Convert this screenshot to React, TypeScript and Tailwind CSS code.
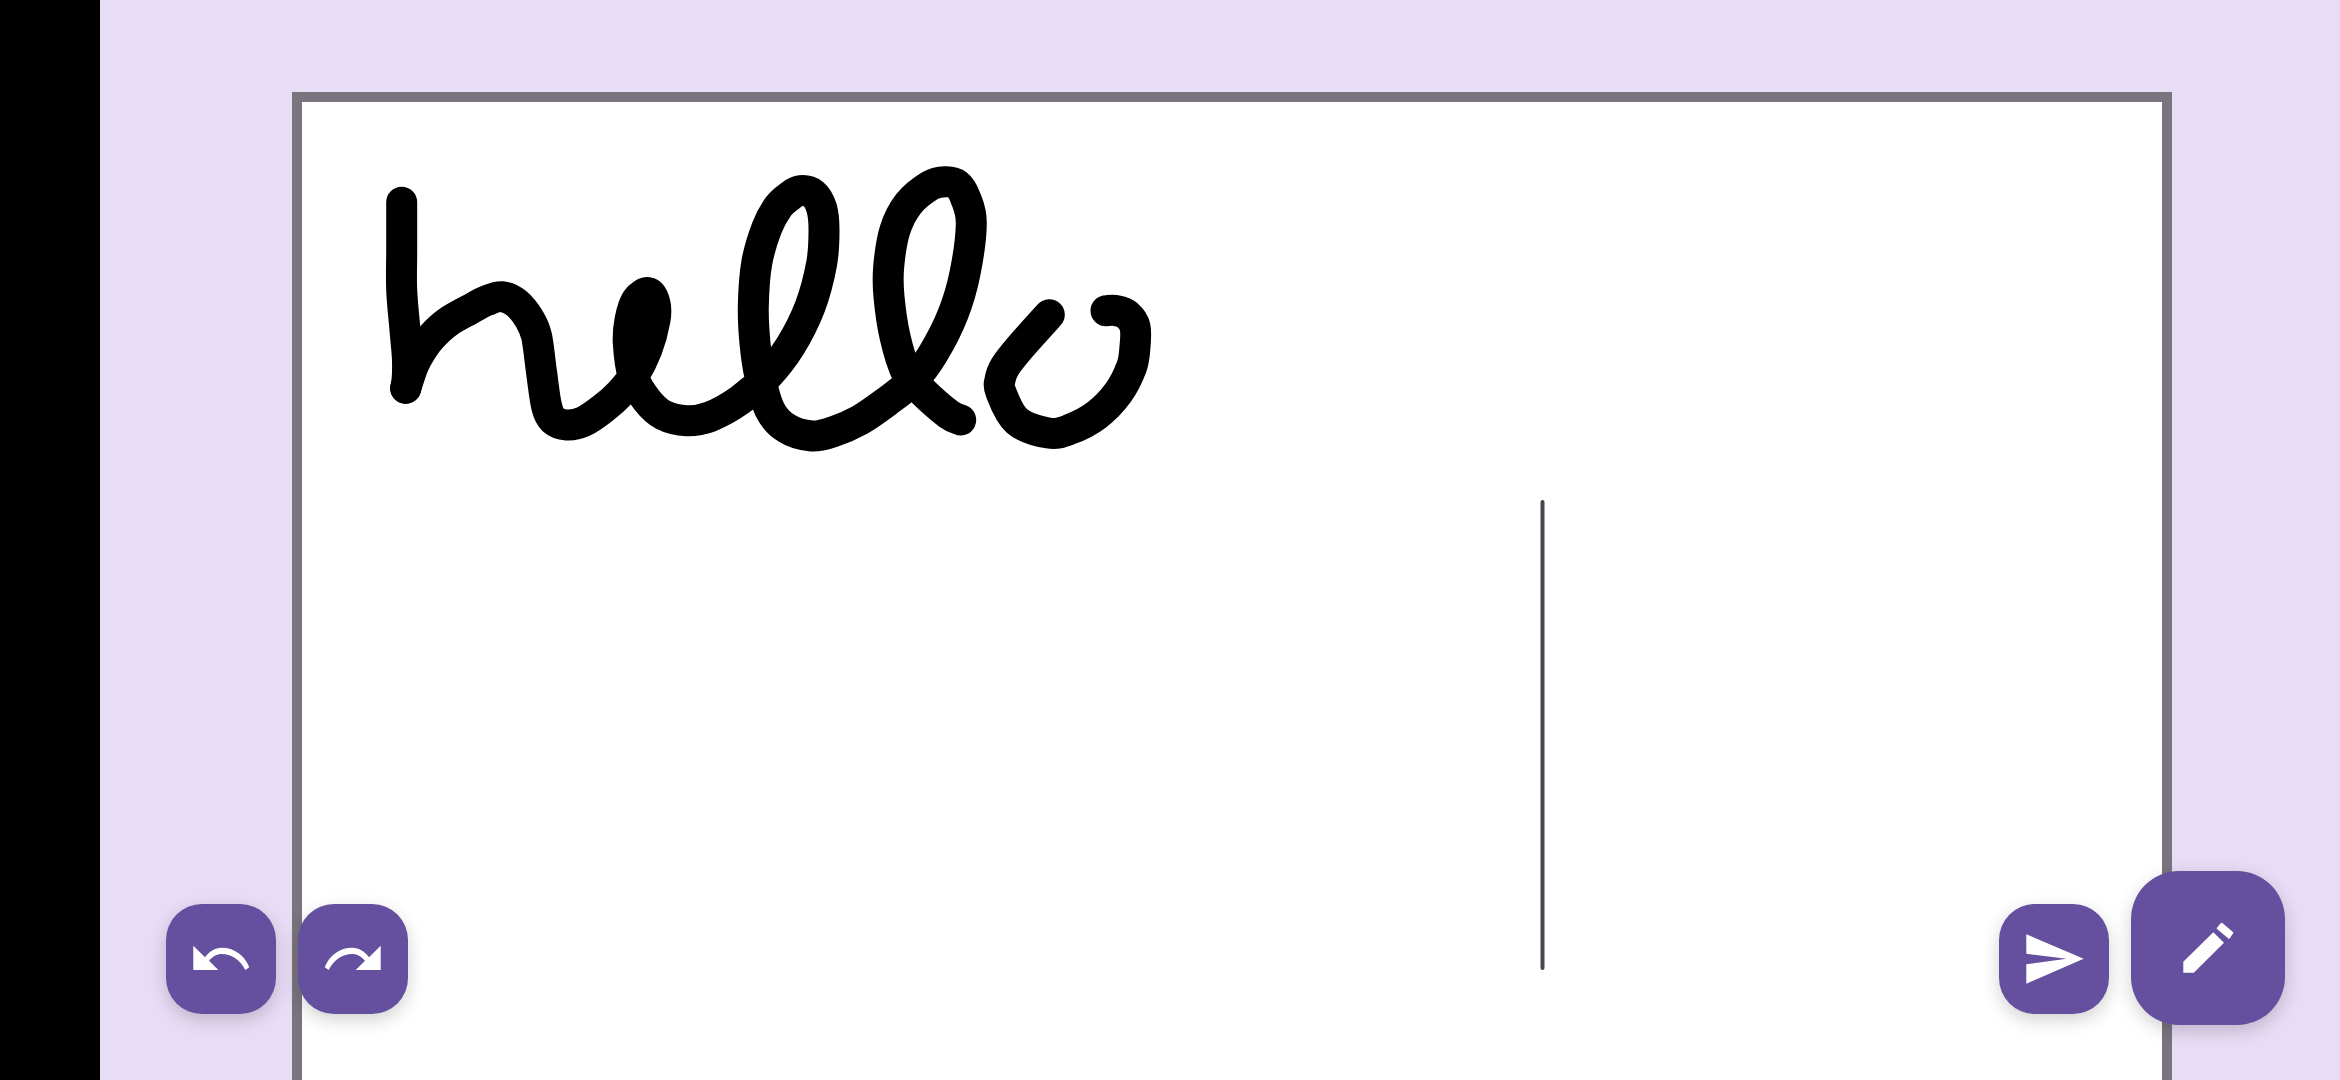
const shift = (ox: number, oy: number, pts: number[][]) =>
  pts.map(([x, y]) => [ox + x / 3, oy + y / 3]);

// catmull-rom through the sampled pen points
function smooth(pts: number[][]) {
  let d = `M${pts[0][0].toFixed(1)} ${pts[0][1].toFixed(1)}`;
  for (let i = 0; i < pts.length - 1; i++) {
    const p0 = pts[Math.max(i - 1, 0)];
    const p1 = pts[i];
    const p2 = pts[i + 1];
    const p3 = pts[Math.min(i + 2, pts.length - 1)];
    const c1x = p1[0] + (p2[0] - p0[0]) / 6;
    const c1y = p1[1] + (p2[1] - p0[1]) / 6;
    const c2x = p2[0] - (p3[0] - p1[0]) / 6;
    const c2y = p2[1] - (p3[1] - p1[1]) / 6;
    d += ` C${c1x.toFixed(1)} ${c1y.toFixed(1)} ${c2x.toFixed(1)} ${c2y.toFixed(1)} ${p2[0].toFixed(1)} ${p2[1].toFixed(1)}`;
  }
  return d;
}

const stemH = shift(370, 150, [
  [95, 157], [95, 300], [95, 420], [105, 540], [112, 620], [112, 680], [107, 715],
]);

const helloFirst = [
  ...shift(370, 150, [
    [107, 715], [130, 647], [155, 600], [185, 560], [235, 515], [300, 478], [350, 452], [395, 440],
    [440, 460], [480, 510], [500, 560], [515, 670], [530, 770], [550, 810], [590, 825],
    [640, 815], [700, 775], [750, 730], [790, 680], [830, 600], [855, 510], [855, 460],
    [835, 428], [800, 450], [780, 510], [775, 580], [790, 680], [830, 750], [880, 795],
    [950, 812], [1020, 800],
  ]),
  ...shift(700, 150, [
    [120, 750], [200, 680], [270, 590], [330, 470], [365, 340], [372, 240], [365, 175],
    [340, 132], [300, 122], [270, 138], [235, 170], [200, 235], [170, 340],
    [160, 470], [165, 580], [180, 680], [210, 780], [260, 835], [335, 858], [400, 845],
    [480, 810], [560, 755], [640, 690], [700, 610], [760, 490], [795, 370], [814, 220],
    [797, 145], [772, 104], [735, 95], [690, 107], [625, 162], [585, 240], [566, 350],
    [567, 440], [585, 560], [620, 670], [668, 725], [745, 792], [782, 810],
  ]),
];

const helloO = shift(700, 150, [
  [1048, 494], [960, 592], [915, 650], [900, 690], [902, 725], [950, 812], [1045, 849],
  [1110, 838], [1190, 795], [1255, 728], [1295, 650], [1305, 590], [1305, 530], [1282, 495],
  [1250, 482], [1218, 482],
]);

const strokes = [stemH, helloFirst, helloO];

function ActionButton({ className, children }: { className: string; children: React.ReactNode }) {
  return (
    <button
      type="button"
      className={`absolute flex items-center justify-center bg-[#65509F] shadow-[0_6px_18px_rgba(0,0,0,0.18)] ${className}`}
    >
      {children}
    </button>
  );
}

export default function App() {
  return (
    <div className="relative flex h-[1080px] w-[2340px] overflow-hidden bg-black">
      <div className="w-[100px] shrink-0 bg-black" />
      <main className="flex-1 bg-[#E7DDF6] pl-[192px] pr-[168px] pt-[92px]">
        <div className="relative h-[1100px] border-[10px] border-[#79747E] bg-white">
          <svg className="absolute inset-0 h-full w-full" viewBox="302 102 1860 1080" fill="none">
            {strokes.map((pts, i) => (
              <path
                key={i}
                d={smooth(pts)}
                stroke="#000"
                strokeWidth={31}
                strokeLinecap="round"
                strokeLinejoin="round"
              />
            ))}
            <line x1={1542.5} y1={502} x2={1542.5} y2={968} stroke="#49454F" strokeWidth={4} strokeLinecap="round" />
          </svg>
        </div>
      </main>

      <ActionButton className="left-[166px] top-[904px] h-[110px] w-[110px] rounded-[36px]">
        <svg viewBox="0 0 110 110" className="h-full w-full" fill="#fff">
          <path d="M27.3 41.7 L39 53.3 C43 47.5 49 43.7 55.7 43.7 C68 43.7 78.5 51 83.3 63.3 L79.3 66 C74 55.5 65 50 55.7 50 C51 50 46.5 52.5 43 56.7 L52.3 66 H27.3 Z" />
        </svg>
      </ActionButton>
      <ActionButton className="left-[298px] top-[904px] h-[110px] w-[110px] rounded-[36px]">
        <svg viewBox="0 0 110 110" className="h-full w-full" fill="#fff">
          <path d="M82.7 41.7 L71 53.3 C67 47.5 61 43.7 54.3 43.7 C42 43.7 31.5 51 26.7 63.3 L30.7 66 C36 55.5 45 50 54.3 50 C59 50 63.5 52.5 67 56.7 L57.7 66 H82.7 Z" />
        </svg>
      </ActionButton>
      <ActionButton className="left-[1999px] top-[904px] h-[110px] w-[110px] rounded-[36px]">
        <svg viewBox="0 0 110 110" className="h-full w-full" fill="#fff">
          <path d="M27.3 30.3 L84.7 54.7 L27.3 79.7 V60.3 L67.7 54.7 L27.3 49.7 Z" />
        </svg>
      </ActionButton>
      <ActionButton className="left-[2131px] top-[871px] h-[154px] w-[154px] rounded-[48px]">
        <svg viewBox="0 0 154 154" className="h-full w-full" fill="#fff">
          <path d="M52.3 90.7 L82.3 61.3 L93 71.7 L62.8 101.7 H52.3 Z" />
          <path d="M90.7 52.7 L101.3 61.7 L98 66.7 L86.7 57.3 Z" stroke="#fff" strokeWidth={2} strokeLinejoin="round" />
        </svg>
      </ActionButton>
    </div>
  );
}
